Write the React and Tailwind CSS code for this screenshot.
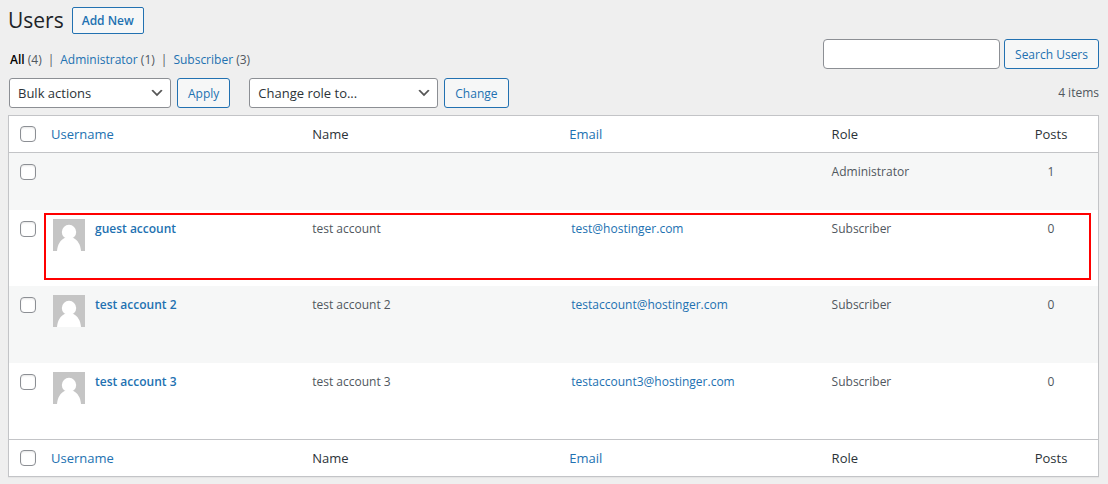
import { useState } from "react";

const users = [
  { id: 1, username: "", name: "", email: "", role: "Administrator", posts: 1, height: "h-[57px]" },
  { id: 2, username: "guest account", name: "test account", email: "test@hostinger.com", role: "Subscriber", posts: 0, height: "h-[76px]", highlight: true },
  { id: 3, username: "test account 2", name: "test account 2", email: "testaccount@hostinger.com", role: "Subscriber", posts: 0, height: "h-[77px]" },
  { id: 4, username: "test account 3", name: "test account 3", email: "testaccount3@hostinger.com", role: "Subscriber", posts: 0, height: "h-[76px]" },
];

function Checkbox({ label, checked, onChange }) {
  return (
    <input
      type="checkbox"
      aria-label={label}
      checked={checked}
      onChange={onChange}
      className="block w-4 h-4 appearance-none rounded border border-[#8c8f94] bg-white shadow-[inset_0_1px_2px_rgba(0,0,0,0.1)] checked:bg-[#2271b1]"
    />
  );
}

function Button({ children }) {
  return (
    <button
      type="button"
      className="h-[30px] px-[10px] pt-px rounded-[3px] border border-[#2271b1] bg-[#f6f7f7] text-[#2271b1] whitespace-nowrap"
    >
      {children}
    </button>
  );
}

function Select({ label, width, options }) {
  return (
    <div className={`relative ${width}`}>
      <select
        aria-label={label}
        className="block w-full h-[30px] pl-2 pr-6 pt-px appearance-none rounded-[3px] border border-[#8c8f94] bg-white text-[13px] text-[#2c3338]"
      >
        {options.map((o) => (
          <option key={o}>{o}</option>
        ))}
      </select>
      <svg
        viewBox="0 0 20 20"
        className="absolute right-[6px] top-[7px] w-4 h-4 pointer-events-none"
      >
        <path d="M5 6l5 5 5-5 2 1-7 7-7-7 2-1z" fill="#555" />
      </svg>
    </div>
  );
}

function Avatar() {
  return (
    <svg viewBox="0 0 32 32" className="w-8 h-8 shrink-0">
      <rect width="32" height="32" fill="#c5c5c5" />
      <circle cx="16" cy="13" r="7.200" fill="#fff" />
      <path d="M4 32c.5-6.500 3.400-10.800 7.500-13h9c4.100 2.200 7 6.500 7.500 13z" fill="#fff" />
    </svg>
  );
}

function HeadingRow({ edge, checked, onToggle }) {
  const cell = `h-[37px] font-normal ${edge}`;

  return (
    <tr className="bg-white text-[#2c3338] text-[13px] text-left">
      <td className={`${cell} pl-[11px]`}>
        <Checkbox label="Select all" checked={checked} onChange={onToggle} />
      </td>
      <th className={`${cell} px-2 pt-px text-left`}>
        <a href="#username" className="text-[#2271b1]">Username</a>
      </th>
      <th className={`${cell} px-[10px] pt-px text-left`}>Name</th>
      <th className={`${cell} px-2 pt-px text-left`}>
        <a href="#email" className="text-[#2271b1]">Email</a>
      </th>
      <th className={`${cell} px-[10px] pt-px text-left`}>Role</th>
      <th className={`${cell} pt-px text-center`}>Posts</th>
    </tr>
  );
}

export default function App() {
  const [selected, setSelected] = useState([]);

  const allSelected = selected.length === users.length;

  const toggle = (id) =>
    setSelected((prev) =>
      prev.includes(id) ? prev.filter((x) => x !== id) : [...prev, id]
    );

  const toggleAll = () => setSelected(allSelected ? [] : users.map((u) => u.id));

  return (
    <div className="min-h-screen bg-[#efefef] pt-[7px] pl-2 pr-[9px] pb-[7px] font-['Open_Sans',sans-serif] text-[12px] text-[#50575e]">

      {/* Title */}
      <div className="flex items-center gap-2">
        <h1 className="text-[21px] leading-[27px] text-[#1d2327]">Users</h1>
        <a
          href="#new"
          className="h-[27px] px-[9px] flex items-center rounded-[2px] border border-[#2271b1] bg-[#f6f7f7] font-semibold text-[#2271b1]"
        >
          Add New
        </a>
      </div>

      {/* Role filters and search */}
      <div className="flex items-end justify-between mt-[5px]">
        <ul className="flex gap-[6px] pl-[2px] leading-[18px]">
          <li>
            <a href="#all" className="font-semibold text-black">All</a> (4)
          </li>
          <li>|</li>
          <li>
            <a href="#administrator" className="text-[#2271b1]">Administrator</a> (1)
          </li>
          <li>|</li>
          <li>
            <a href="#subscriber" className="text-[#2271b1]">Subscriber</a> (3)
          </li>
        </ul>

        <div className="flex gap-1">
          <input
            type="search"
            aria-label="Search Users"
            className="w-[177px] h-[30px] px-2 rounded border border-[#8c8f94] bg-white"
          />
          <Button>Search Users</Button>
        </div>
      </div>

      {/* Bulk actions */}
      <div className="flex items-center justify-between mt-[9px] pl-px">
        <div className="flex gap-[19px]">
          <div className="flex gap-[6px]">
            <Select label="Bulk actions" width="w-[162px]" options={["Bulk actions", "Delete"]} />
            <Button>Apply</Button>
          </div>
          <div className="flex gap-[6px]">
            <Select
              label="Change role to"
              width="w-[189px]"
              options={["Change role to...", "Subscriber", "Administrator"]}
            />
            <Button>Change</Button>
          </div>
        </div>
        <span>4 items</span>
      </div>

      {/* Users table */}
      <div className="mt-[7px] border border-[#c3c4c7] bg-white shadow-[0_1px_1px_rgba(0,0,0,0.04)]">
        <table className="w-full table-fixed border-separate border-spacing-0">
          <colgroup>
            <col className="w-[34px]" />
            <col className="w-[23.8%]" />
            <col className="w-[23.8%]" />
            <col className="w-[23.9%]" />
            <col />
            <col className="w-[94px]" />
          </colgroup>

          <thead>
            <HeadingRow edge="border-b border-[#c3c4c7]" checked={allSelected} onToggle={toggleAll} />
          </thead>

          <tbody>
            {users.map((u) => (
              <tr
                key={u.id}
                className={`relative align-top leading-5 odd:bg-[#f6f7f7] ${u.height}`}
              >
                <td className="pl-[11px] pt-[11px]">
                  <Checkbox
                    label={`Select ${u.username || u.role}`}
                    checked={selected.includes(u.id)}
                    onChange={() => toggle(u.id)}
                  />
                  {u.highlight && (
                    <span className="absolute left-[35px] right-[7px] top-[3px] bottom-[6px] border-2 border-[#f00] pointer-events-none" />
                  )}
                </td>
                <td className="px-[10px] pt-[9px]">
                  {u.username && (
                    <div className="flex gap-[10px]">
                      <Avatar />
                      <a href="#edit" className="font-semibold text-[#2271b1]">{u.username}</a>
                    </div>
                  )}
                </td>
                <td className="px-[10px] pt-[9px]">{u.name}</td>
                <td className="px-[10px] pt-[9px]">
                  {u.email && (
                    <a href={`mailto:${u.email}`} className="text-[#2271b1]">{u.email}</a>
                  )}
                </td>
                <td className="px-[10px] pt-[9px]">{u.role}</td>
                <td className="pt-[9px] text-center">{u.posts}</td>
              </tr>
            ))}
          </tbody>

          <tfoot>
            <HeadingRow edge="border-t border-[#c3c4c7]" checked={allSelected} onToggle={toggleAll} />
          </tfoot>
        </table>
      </div>
    </div>
  );
}
